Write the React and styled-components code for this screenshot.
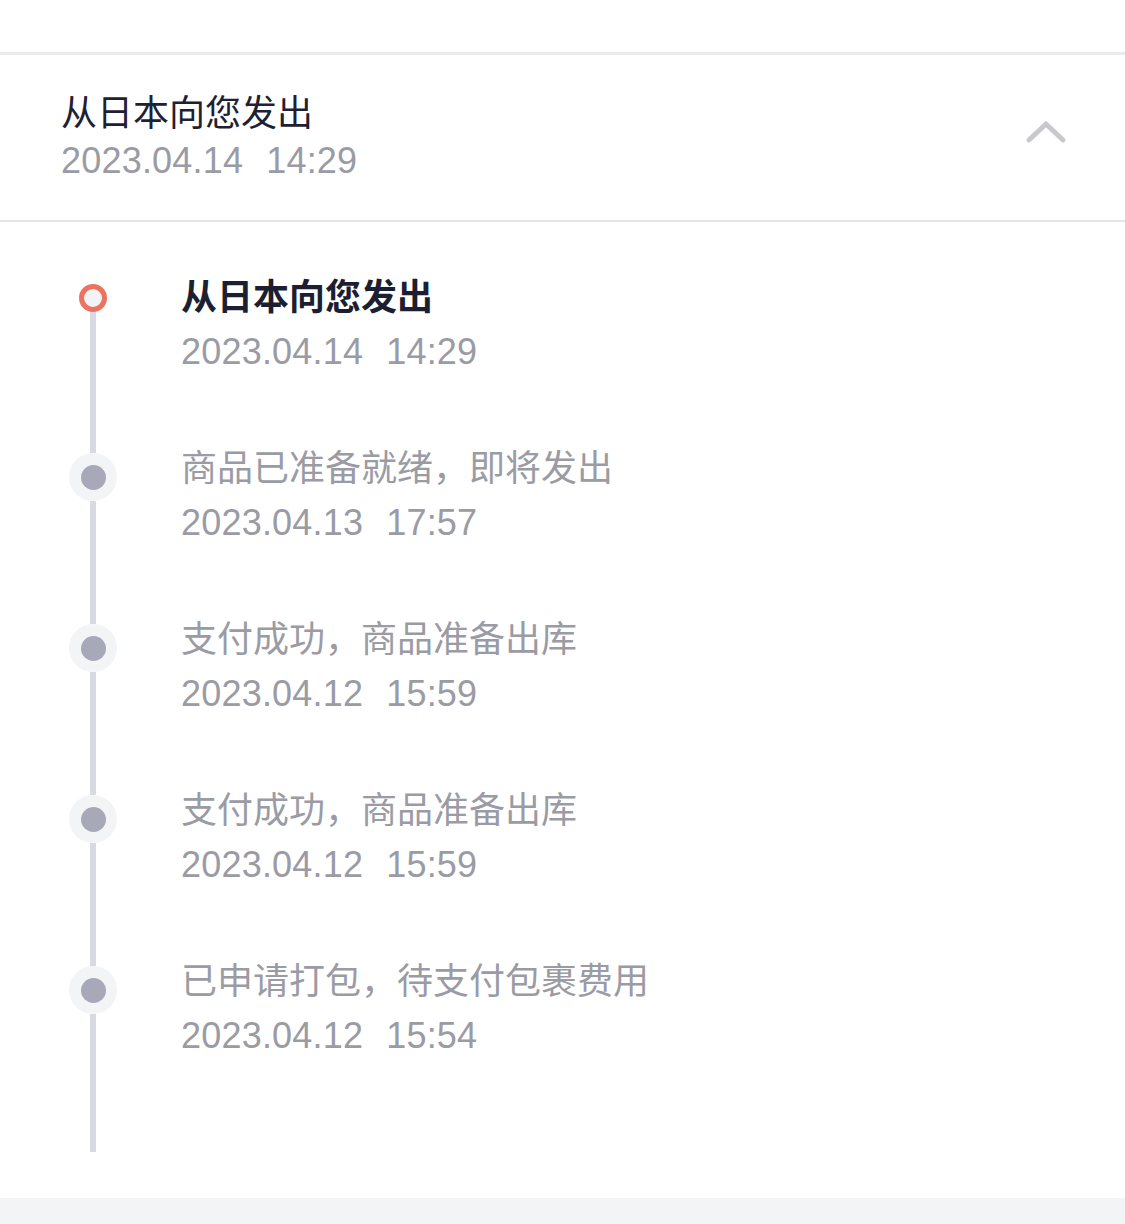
import React from "react";
import styled, { createGlobalStyle } from "styled-components";

const Global = createGlobalStyle`
  html, body { margin: 0; padding: 0; background: #ffffff; }
  body { font-family: "Liberation Sans", "Noto Sans CJK SC", sans-serif; }
`;

const Page = styled.div`
  width: 1125px;
  display: flex;
  flex-direction: column;
  background: #ffffff;
`;

const TopBar = styled.div`
  height: 52px;
  border-bottom: 3px solid #ebebec;
`;

const Header = styled.div`
  height: 165px;
  display: flex;
  align-items: center;
  justify-content: space-between;
  padding: 0 58px 0 61px;
  border-bottom: 2px solid #e4e4e6;
`;

const HeaderText = styled.div`
  display: flex;
  flex-direction: column;
  margin-top: -4px;
`;

const HeaderTitle = styled.div`
  font-size: 36px;
  line-height: 50px;
  color: #1d2132;
  font-family: "Liberation Sans", "Noto Sans CJK SC", sans-serif;
`;

const DateLine = styled.div`
  font-size: 36px;
  line-height: ${(p) => p.$lh || 54}px;
  color: #9a9ba4;
  letter-spacing: 0.2px;
  display: flex;
  gap: 23px;
  margin-top: ${(p) => p.$mt || 0}px;
`;

const Chevron = styled.svg`
  width: 42px;
  height: 28px;
  margin-top: -13px;
`;

const Timeline = styled.div`
  padding-top: 47px;
  height: 929px;
  display: flex;
  flex-direction: column;
`;

const Item = styled.div`
  display: grid;
  grid-template-columns: 181px 1fr;
  height: ${(p) => (p.$last ? "auto" : "171px")};
  flex: ${(p) => (p.$last ? 1 : "none")};
`;

const Rail = styled.div`
  display: flex;
  flex-direction: column;
  align-items: center;
  width: 186px;
`;

const Segment = styled.div`
  width: 6px;
  background: ${(p) => (p.$hidden ? "transparent" : "#d9d9e1")};
  height: ${(p) => (p.$h != null ? `${p.$h}px` : "auto")};
  flex: ${(p) => (p.$grow ? 1 : "none")};
  margin-bottom: ${(p) => p.$mb || 0}px;
`;

const Ring = styled.div`
  width: 28px;
  height: 28px;
  box-sizing: border-box;
  border-radius: 50%;
  border: 5px solid #ec735f;
  background: #f2f3f6;
  flex: none;
`;

const Halo = styled.div`
  width: 48px;
  height: 48px;
  border-radius: 50%;
  background: #f3f4f6;
  display: flex;
  align-items: center;
  justify-content: center;
  flex: none;
`;

const Dot = styled.div`
  width: 25px;
  height: 25px;
  border-radius: 50%;
  background: #a7a9b8;
`;

const Body = styled.div`
  display: flex;
  flex-direction: column;
`;

const Title = styled.div`
  font-size: 36px;
  line-height: 54px;
  color: ${(p) => (p.$active ? "#1b1f31" : "#9a9ba4")};
  font-weight: ${(p) => (p.$active ? 700 : 400)};
  font-family: "Noto Sans CJK SC", sans-serif;
  margin-top: -2px;
  margin-bottom: 2px;
`;

const Footer = styled.div`
  height: 27px;
  background: #f3f4f6;
`;

const events = [
  { title: "从日本向您发出", date: "2023.04.14", time: "14:29" },
  { title: "商品已准备就绪，即将发出", date: "2023.04.13", time: "17:57" },
  { title: "支付成功，商品准备出库", date: "2023.04.12", time: "15:59" },
  { title: "支付成功，商品准备出库", date: "2023.04.12", time: "15:59" },
  { title: "已申请打包，待支付包裹费用", date: "2023.04.12", time: "15:54" },
];

export default function App() {
  return (
    <Page>
      <Global />
      <TopBar />
      <Header>
        <HeaderText>
          <HeaderTitle>从日本向您发出</HeaderTitle>
          <DateLine $lh={44}>
            <span>2023.04.14</span>
            <span>14:29</span>
          </DateLine>
        </HeaderText>
        <Chevron viewBox="0 0 42 28">
          <path
            d="M4 23 L21 7 L38 23"
            fill="none"
            stroke="#c9c9cd"
            strokeWidth="5"
            strokeLinecap="round"
            strokeLinejoin="round"
          />
        </Chevron>
      </Header>
      <Timeline>
        {events.map((e, i) => {
          const first = i === 0;
          const last = i === events.length - 1;
          return (
            <Item key={i} $last={last}>
              <Rail>
                {first ? (
                  <>
                    <Segment $hidden $h={15} />
                    <Ring />
                    <Segment $grow />
                  </>
                ) : (
                  <>
                    <Segment $h={13} />
                    <Halo>
                      <Dot />
                    </Halo>
                    <Segment $grow $mb={last ? 46 : 0} />
                  </>
                )}
              </Rail>
              <Body>
                <Title $active={first}>{e.title}</Title>
                <DateLine $mt={2}>
                  <span>{e.date}</span>
                  <span>{e.time}</span>
                </DateLine>
              </Body>
            </Item>
          );
        })}
      </Timeline>
      <Footer />
    </Page>
  );
}
